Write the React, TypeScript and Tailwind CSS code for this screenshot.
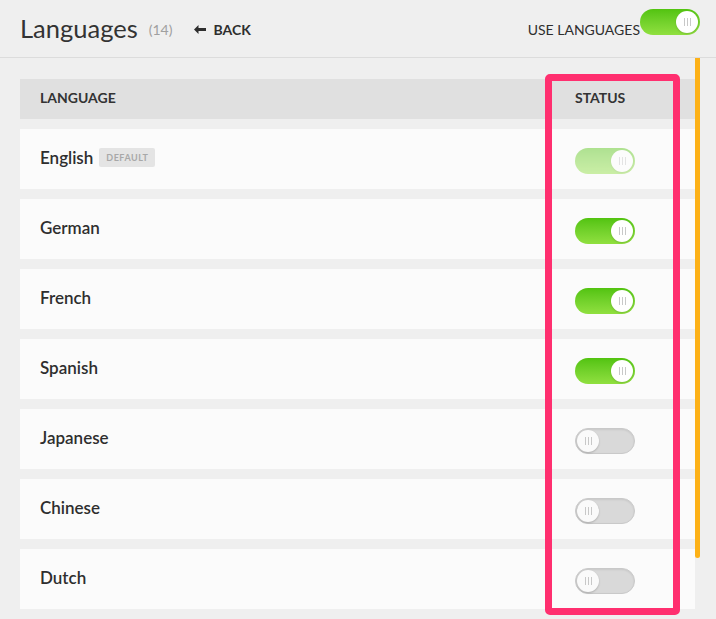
const languages = [
  { name: "English", on: true, isDefault: true },
  { name: "German", on: true },
  { name: "French", on: true },
  { name: "Spanish", on: true },
  { name: "Japanese", on: false },
  { name: "Chinese", on: false },
  { name: "Dutch", on: false },
];

function Grip() {
  return (
    <span className="flex gap-[2px]">
      <span className="block h-[8px] w-px bg-[#c8c8c8]" />
      <span className="block h-[8px] w-px bg-[#c8c8c8]" />
      <span className="block h-[8px] w-px bg-[#c8c8c8]" />
    </span>
  );
}

function Toggle({ on, disabled }: { on: boolean; disabled?: boolean }) {
  if (on) {
    return (
      <div
        className={`relative h-[26px] w-[60px] rounded-full bg-gradient-to-b from-[#52c30f] to-[#90e03f] ${
          disabled ? "opacity-45" : ""
        }`}
      >
        <span className="absolute right-[2px] top-[2px] flex h-[22px] w-[22px] items-center justify-center rounded-full bg-white shadow-[0_1px_2px_rgba(0,0,0,0.15)]">
          <Grip />
        </span>
      </div>
    );
  }
  return (
    <div className="relative h-[26px] w-[60px] rounded-full border border-[#c9c9c9] bg-[#d9d9d9] shadow-[inset_0_1px_2px_rgba(0,0,0,0.08)]">
      <span className="absolute left-[1px] top-[1px] flex h-[22px] w-[22px] items-center justify-center rounded-full bg-[#fafafa] shadow-[0_1px_2px_rgba(0,0,0,0.2)]">
        <Grip />
      </span>
    </div>
  );
}

export default function App() {
  return (
    <div
      className="relative h-[619px] w-[716px] overflow-hidden bg-[#efefef] text-[#2e2e2e]"
      style={{ fontFamily: "Lato, 'Open Sans', sans-serif" }}
    >
      {/* Header */}
      <div className="flex h-[58px] items-center justify-between border-b border-[#dcdcdc] pl-5 pr-4">
        <div className="flex items-center">
          <h1 className="text-[25.5px] font-normal leading-none text-[#333]">Languages</h1>
          <span className="ml-[11px] mt-[2px] text-[14px] text-[#a0a0a0]">(14)</span>
          <span className="ml-[22px] mt-[2px] flex items-center gap-[7px] text-[14px] font-bold text-[#2e2e2e]">
            <svg width="12" height="9" viewBox="0 0 12 9" fill="#2e2e2e">
              <path d="M0 4.5 4.5 0v3H12v3H4.5v3z" />
            </svg>
            BACK
          </span>
        </div>
        <div className="flex self-start">
          <span className="mt-[20px] text-[14px] leading-[20px] text-[#2e2e2e]">USE LANGUAGES</span>
          <div className="mt-[9px]">
            <Toggle on />
          </div>
        </div>
      </div>

      {/* Table */}
      <div className="pl-5 pr-[21px] pt-[21px]">
        <div className="flex h-[40px] items-center bg-[#e0e0e0] pb-[3px] text-[14px] font-bold text-[#333]">
          <div className="flex-1 pl-5">LANGUAGE</div>
          <div className="w-[120px]">STATUS</div>
        </div>
        {languages.map((l) => (
          <div key={l.name} className="mt-[10px] flex h-[60px] items-center bg-[#fbfbfb]">
            <div className="flex flex-1 items-center pb-[3px] pl-5">
              <span className="text-[17px] font-semibold text-[#2e2e2e]">{l.name}</span>
              {l.isDefault && (
                <span className="ml-[6px] rounded-[2px] bg-[#e4e4e4] px-[7px] py-[5px] text-[9px] font-bold leading-[9px] tracking-[0.5px] text-[#a8a8a8]">
                  DEFAULT
                </span>
              )}
            </div>
            <div className="mt-[3px] w-[120px]">
              <Toggle on={l.on} disabled={l.isDefault} />
            </div>
          </div>
        ))}
      </div>

      {/* Scroll indicator */}
      <div className="absolute left-[695px] top-[58px] h-[500px] w-[5px] rounded-b-sm bg-[#fdb117]" />

      {/* Highlight box */}
      <div className="absolute left-[545px] top-[74px] h-[541px] w-[135px] rounded-[5px] border-[7px] border-[#ff2f6f]" />
    </div>
  );
}
